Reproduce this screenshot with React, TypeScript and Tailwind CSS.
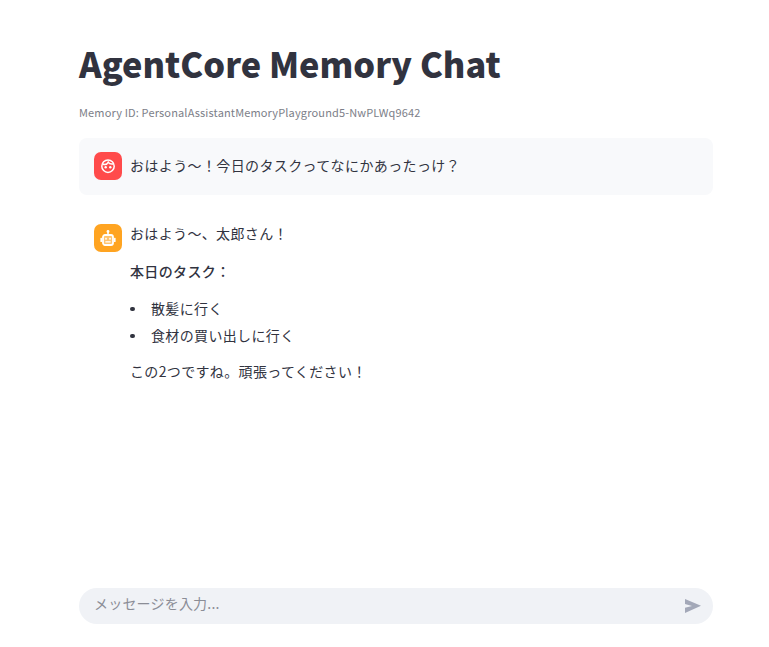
const font = { fontFamily: '"Noto Sans CJK JP", "Noto Sans", sans-serif' };

function FaceIcon() {
  return (
    <svg width="16" height="16" viewBox="0 0 16 16" fill="none" stroke="white" strokeWidth="1.5">
      <circle cx="8" cy="8.2" r="6.2" />
      <path d="M2.6 6c2.2.8 4.6.4 5.6-1.8.8 1.4 2.6 2.2 5 1.8" />
      <circle cx="5.7" cy="9.2" r="1.2" fill="white" stroke="none" />
      <circle cx="10.3" cy="9.2" r="1.2" fill="white" stroke="none" />
    </svg>
  );
}

function RobotIcon() {
  return (
    <svg width="18" height="18" viewBox="0 0 18 18" fill="none">
      <circle cx="9" cy="2.4" r="1.4" fill="white" />
      <rect x="8.2" y="3" width="1.6" height="3" fill="white" />
      <rect x="4" y="6" width="10" height="10" rx="2" fill="white" fillOpacity="0.35" stroke="white" strokeWidth="1.8" />
      <rect x="1.4" y="8.8" width="1.6" height="4.2" rx="0.6" fill="white" />
      <rect x="15" y="8.8" width="1.6" height="4.2" rx="0.6" fill="white" />
      <rect x="6.2" y="8.8" width="1.6" height="1.8" fill="white" />
      <rect x="10.2" y="8.8" width="1.6" height="1.8" fill="white" />
      <rect x="6.4" y="12.2" width="5.2" height="1.3" fill="white" />
    </svg>
  );
}

function Bullet({ text }: { text: string }) {
  return (
    <li className="flex h-[27px] items-center">
      <span className="mt-[3px] h-[4.5px] w-[4.5px] shrink-0 rounded-full bg-[#31333f]" />
      <span className="ml-[16.5px]">{text}</span>
    </li>
  );
}

export default function App() {
  return (
    <div className="flex min-h-[647px] flex-col bg-white pr-[56px] pl-[79px] text-[#31333f]" style={font}>
      <h1 className="mt-[34px] text-[34.35px] leading-[58px] font-black">AgentCore Memory Chat</h1>
      <p className="mt-[11px] text-[11px] leading-[18px] tracking-[0.15px] text-[#7c7e88]">
        Memory ID: PersonalAssistantMemoryPlayground5-NwPLWq9642
      </p>

      <div className="mt-[17px] flex h-[57px] gap-[8px] rounded-[8px] bg-[#f8f9fb] px-[15px] pt-[14px]">
        <div className="flex h-[28px] w-[28px] shrink-0 items-center justify-center rounded-[7px] bg-[#ff4b4b]">
          <FaceIcon />
        </div>
        <p className="-mt-[1px] text-[14px] leading-[28px] tracking-[0.38px]">おはよう〜！今日のタスクってなにかあったっけ？</p>
      </div>

      <div className="mt-[15px] flex gap-[8px] px-[15px] pt-[14px]">
        <div className="flex h-[28px] w-[28px] shrink-0 items-center justify-center rounded-[7px] bg-[#ffa421]">
          <RobotIcon />
        </div>
        <div className="text-[14px] leading-[24px] tracking-[0.35px]">
          <p className="-mt-[3px]">おはよう〜、太郎さん！</p>
          <p className="mt-[14px] font-medium">本日のタスク：</p>
          <ul className="mt-[11px]">
            <Bullet text="散髪に行く" />
            <Bullet text="食材の買い出しに行く" />
          </ul>
          <p className="mt-[11px]">この2つですね。頑張ってください！</p>
        </div>
      </div>

      <div className="mt-auto mb-[23px] flex h-[36px] items-center justify-between rounded-[18px] bg-[#f0f2f6] pr-[12px] pl-[15px]">
        <span className="-mt-[5px] text-[14px] tracking-[0.2px] text-[#8b8d96]">メッセージを入力...</span>
        <svg width="16" height="14" viewBox="0 0 16 14">
          <path d="M0 0 16 6.8 0 14V8.8L7 6.9 0 5Z" fill="#a3a8b8" />
        </svg>
      </div>
    </div>
  );
}
